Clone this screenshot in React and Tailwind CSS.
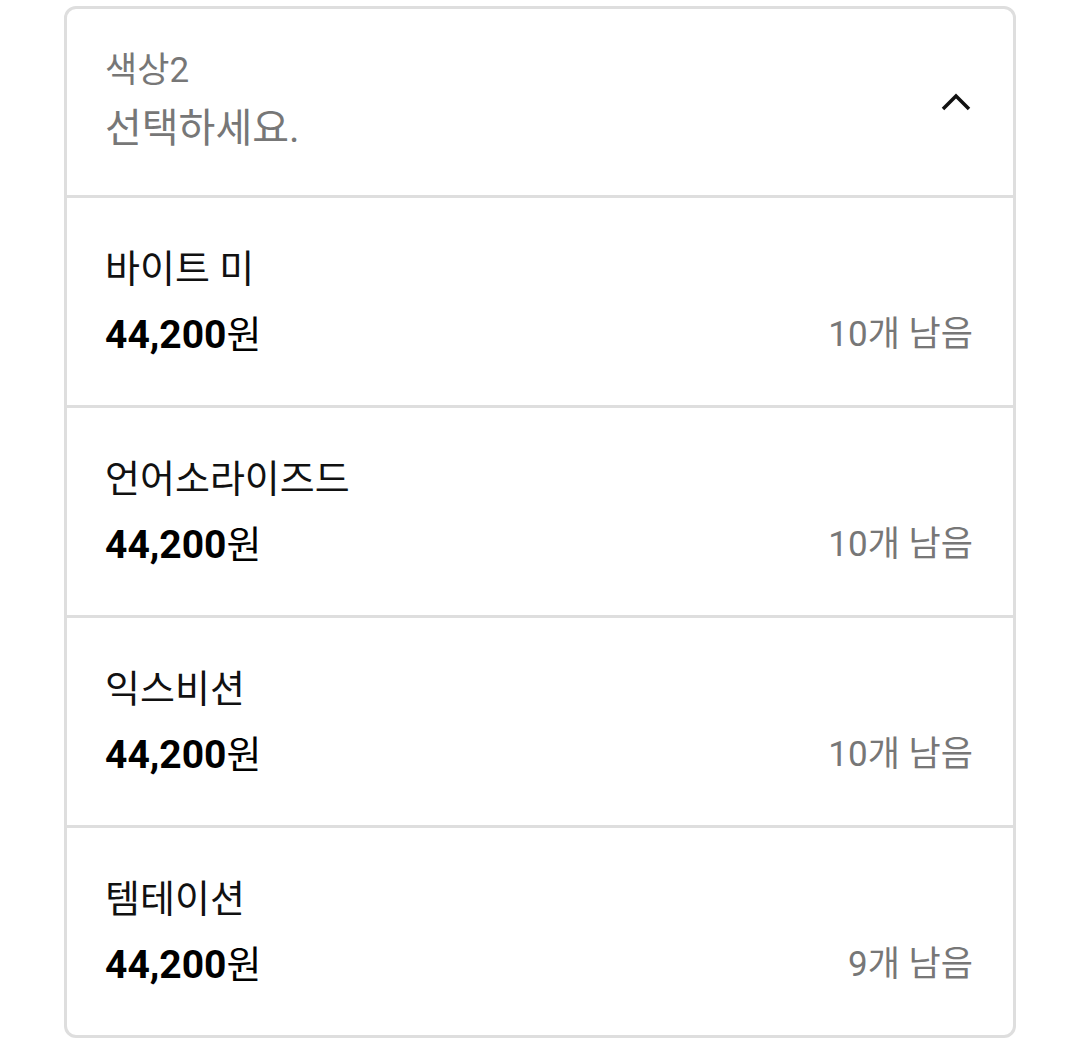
import React from "react";

const options = [
  { name: "바이트 미", price: "44,200", stock: 10 },
  { name: "언어소라이즈드", price: "44,200", stock: 10 },
  { name: "익스비션", price: "44,200", stock: 10 },
  { name: "템테이션", price: "44,200", stock: 9 },
];

const font = { fontFamily: '"Roboto", "Noto Sans CJK KR", sans-serif' };

const ChevronUp = () => (
  <svg width="30" height="18" viewBox="0 0 30 18" fill="none">
    <path d="M2 16 L15 3 L28 16" stroke="#111" strokeWidth="3.5" />
  </svg>
);

const OptionRow = ({ name, price, stock }) => (
  <div className="h-[210px] border-t-[3px] border-[#dedede] pl-[38px] pr-[40px] flex flex-col justify-center gap-[12px]">
    <div className="text-[38px] leading-[54px] text-[#111]">{name}</div>
    <div className="flex items-center justify-between">
      <div className="text-[38px] leading-[54px] text-black">
        <span className="font-bold text-[39px]">{price}</span>원
      </div>
      <div className="text-[35px] leading-[54px] text-[#777]">{stock}개 남음</div>
    </div>
  </div>
);

export default function App() {
  return (
    <div className="bg-white min-h-[1046px] pt-[6px] px-[64px]" style={font}>
      <div className="border-[3px] border-[#dedede] rounded-[12px] overflow-hidden">
        {/* Header */}
        <div className="h-[186px] pl-[38px] pr-[42px] flex items-center justify-between">
          <div className="flex flex-col gap-[8px]">
            <span className="text-[35px] leading-[46px] text-[#777]">색상2</span>
            <span className="text-[40px] leading-[54px] text-[#777]">선택하세요.</span>
          </div>
          <ChevronUp />
        </div>

        {/* Options */}
        {options.map((o) => (
          <OptionRow key={o.name} {...o} />
        ))}
      </div>
    </div>
  );
}
